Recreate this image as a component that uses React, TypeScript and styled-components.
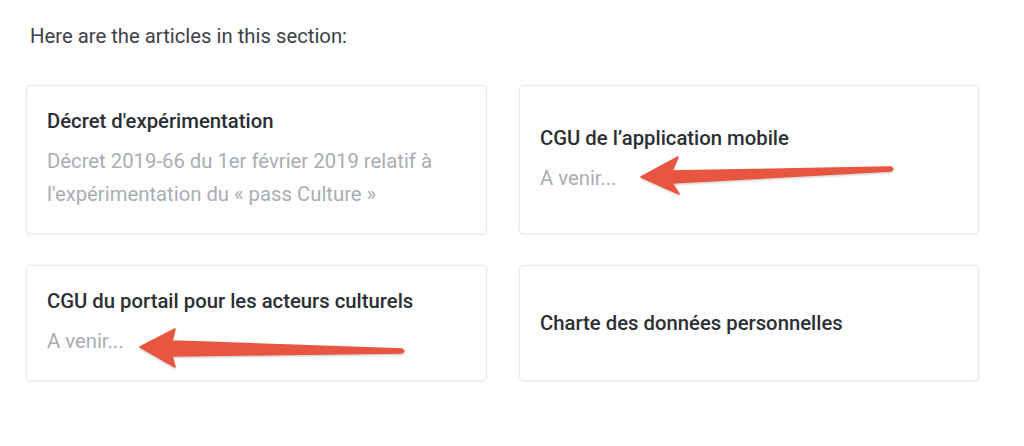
import React from "react";
import styled, { createGlobalStyle } from "styled-components";

const Global = createGlobalStyle`
  html, body { margin: 0; padding: 0; background: #ffffff; }
  body { font-family: Roboto, "Noto Sans", "Liberation Sans", sans-serif; -webkit-font-smoothing: antialiased; }
`;

const Page = styled.div`
  position: relative;
  width: 1024px;
  height: 446px;
  box-sizing: border-box;
  padding: 23px 0 0 26px;
  overflow: hidden;
`;

const Intro = styled.p`
  margin: 0 0 36px 4px;
  font-size: 20.3px;
  line-height: 26px;
  color: #3d4147;
`;

const Grid = styled.div`
  display: grid;
  grid-template-columns: 461px 460px;
  column-gap: 32px;
  row-gap: 31px;
`;

const Card = styled.div`
  display: flex;
  flex-direction: column;
  justify-content: center;
  box-sizing: border-box;
  padding: 22px 20px;
  background: #ffffff;
  border: 1px solid #e9eaec;
  border-radius: 4px;
  box-shadow: 0 1px 3px rgba(0, 0, 0, 0.06);
`;

const Title = styled.div`
  font-size: 20.3px;
  font-weight: 500;
  line-height: 26px;
  color: #2c2f34;
`;

const Desc = styled.div`
  margin-top: 11px;
  font-size: 20.3px;
  line-height: 33px;
  color: #a8adb4;
`;

const Overlay = styled.svg`
  position: absolute;
  left: 0;
  top: 0;
  width: 1024px;
  height: 446px;
  pointer-events: none;
`;

type Article = { title: string; desc?: string };

const articles: Article[] = [
  {
    title: "Décret d'expérimentation",
    desc: "Décret 2019-66 du 1er février 2019 relatif à l'expérimentation du « pass Culture »",
  },
  { title: "CGU de l’application mobile", desc: "A venir..." },
  { title: "CGU du portail pour les acteurs culturels", desc: "A venir..." },
  { title: "Charte des données personnelles" },
];

const Arrow: React.FC<{ points: string }> = ({ points }) => (
  <polygon points={points} fill="#e8553f" stroke="#e8553f" strokeWidth={1.5} strokeLinejoin="round" />
);

export default function App() {
  return (
    <>
      <Global />
      <Page>
        <Intro>Here are the articles in this section:</Intro>
        <Grid>
          {articles.map((a) => (
            <Card key={a.title}>
              <Title>{a.title}</Title>
              {a.desc && <Desc>{a.desc}</Desc>}
            </Card>
          ))}
        </Grid>
        <Overlay viewBox="0 0 1024 446">
          <defs>
            <filter id="sh" x="-10%" y="-50%" width="120%" height="200%">
              <feDropShadow dx="0" dy="1" stdDeviation="1" floodColor="#000" floodOpacity="0.25" />
            </filter>
          </defs>
          <g filter="url(#sh)">
            <Arrow points="641,177 678,157 672,171 891,167 893,169 891,171 672,183 679,194" />
            <Arrow points="140,347 175,329 172,341 402,349 404,351 402,353 172,356 175,367" />
          </g>
        </Overlay>
      </Page>
    </>
  );
}
